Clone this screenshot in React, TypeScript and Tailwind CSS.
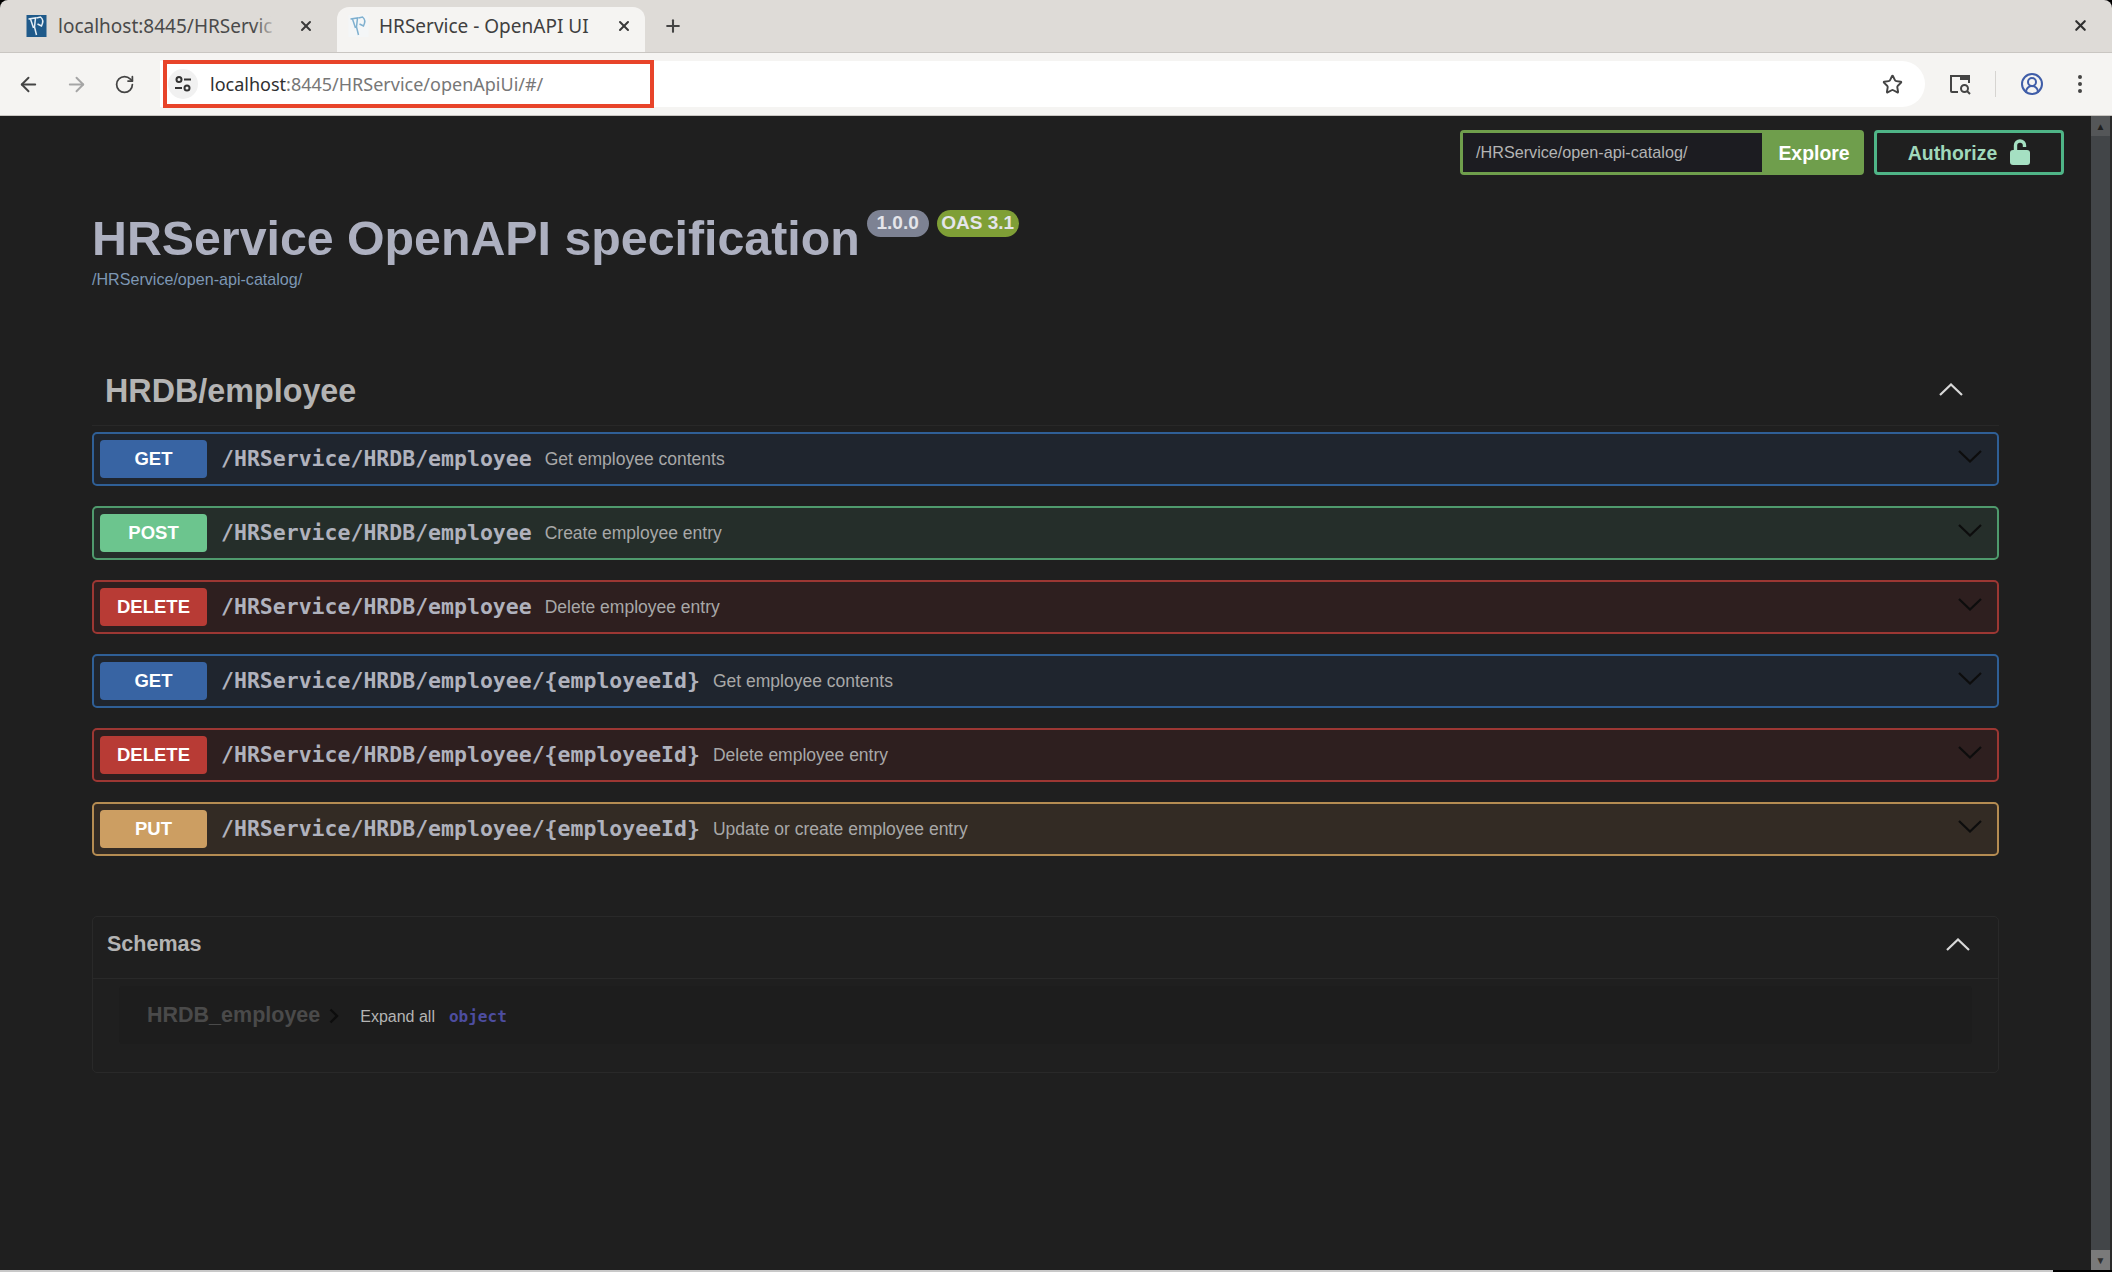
import { ArrowLeft, ArrowRight, RotateCw, Star, X, Plus, EllipsisVertical, CircleUserRound } from "lucide-react";

const rows = [
  { method: "GET", path: "/HRService/HRDB/employee", text: "Get employee contents", border: "border-[#2f5f96]", bg: "bg-[#1f252e]", badge: "bg-[#3864a3]" },
  { method: "POST", path: "/HRService/HRDB/employee", text: "Create employee entry", border: "border-[#4f9a6d]", bg: "bg-[#252e2a]", badge: "bg-[#6cc58e]" },
  { method: "DELETE", path: "/HRService/HRDB/employee", text: "Delete employee entry", border: "border-[#9c3733]", bg: "bg-[#2e1f1f]", badge: "bg-[#b83b35]" },
  { method: "GET", path: "/HRService/HRDB/employee/{employeeId}", text: "Get employee contents", border: "border-[#2f5f96]", bg: "bg-[#1f252e]", badge: "bg-[#3864a3]" },
  { method: "DELETE", path: "/HRService/HRDB/employee/{employeeId}", text: "Delete employee entry", border: "border-[#9c3733]", bg: "bg-[#2e1f1f]", badge: "bg-[#b83b35]" },
  { method: "PUT", path: "/HRService/HRDB/employee/{employeeId}", text: "Update or create employee entry", border: "border-[#b58c52]", bg: "bg-[#332b24]", badge: "bg-[#cc9e62]" },
];

function Favicon({ dark }: { dark?: boolean }) {
  return (
    <svg width="21" height="22" viewBox="0 0 20 22" className="shrink-0">
      <rect width="20" height="22" fill={dark ? "#1f5a8a" : "#f4f6f7"} />
      <path d="M2 4 L9 3 L8 12 L10 20 M4 4 L7 13 M10 3 L14 2 Q18 5 15 11 L11 9" stroke={dark ? "#e5eef5" : "#7fb0cf"} strokeWidth="1.5" fill="none" />
    </svg>
  );
}

// swagger style chevrons, wide and flat
function Arrow({ up, className }: { up?: boolean; className: string }) {
  return (
    <svg width="24" height="13" viewBox="0 0 24 13" fill="none" className={className}>
      <path d={up ? "M1 12 L12 1.5 L23 12" : "M1 1 L12 11.5 L23 1"} stroke="currentColor" strokeWidth="2.2" />
    </svg>
  );
}

function ChromeBar() {
  return (
    <div className="font-['Noto_Sans',sans-serif]">
      {/* tab strip */}
      <div className="h-[53px] bg-[#dedbd7] rounded-t-lg flex items-end pl-[12px] pr-[24px] border-b border-[#c9c6c2]">
        <div className="w-[325px] h-[45px] flex items-center pl-[14px] pb-[7px] text-[19px] text-[#4a4a4a]">
          <Favicon dark />
          <span className="relative ml-[11px] w-[220px] whitespace-nowrap">
            localhost:8445/HRServic
            <span className="absolute right-0 top-0 h-full w-[24px] bg-gradient-to-r from-transparent to-[#dedbd7]" />
          </span>
          <X size={16} strokeWidth={3} className="ml-[20px] text-[#3a3a3a]" />
        </div>
        <div className="w-[308px] h-[45px] bg-[#f5f4f2] rounded-t-xl flex items-center pl-[11px] pb-[7px] text-[19px] text-[#3f3f3f]">
          <Favicon />
          <span className="ml-[10px] w-[237px] whitespace-nowrap">HRService - OpenAPI UI</span>
          <X size={16} strokeWidth={3} className="text-[#3a3a3a]" />
        </div>
        <Plus size={20} strokeWidth={2.5} className="ml-[18px] mb-[16px] text-[#444]" />
        <X size={17} strokeWidth={3} className="ml-auto mb-[18px] mr-[-1px] text-[#2f2f2f]" />
      </div>
      {/* toolbar */}
      <div className="h-[63px] bg-[#f5f4f2] flex items-center border-b border-[#c9c6c2] pl-[17px] pr-[20px]">
        <ArrowLeft size={23} className="text-[#444]" />
        <ArrowRight size={23} className="ml-[25px] text-[#a5a5a5]" />
        <RotateCw size={21} className="ml-[26px] text-[#444]" />
        <div className="relative ml-[25px] w-[1765px] h-[46px] bg-white rounded-r-[23px] flex items-center pl-[8px] text-[18px]">
          <span className="w-[30px] h-[30px] rounded-full bg-[#f1f1f1] flex items-center justify-center">
            <svg width="18" height="18" viewBox="0 0 18 18" fill="none" stroke="#333" strokeWidth="2">
              <circle cx="5" cy="4.5" r="2.5" />
              <path d="M10 4.5h7M1 13h7" />
              <circle cx="13" cy="13" r="2.5" />
            </svg>
          </span>
          <span className="ml-[12px] text-[#2f2f2f]">localhost</span>
          <span className="text-[#777]">:8445/HRService/openApiUi/#/</span>
          <div className="absolute left-[3px] top-[-1px] w-[491px] h-[48px] border-[4px] border-[#e8442a]" />
          <Star size={21} strokeWidth={2.2} className="absolute right-[22px] text-[#444]" />
        </div>
        <svg width="24" height="24" viewBox="0 0 24 24" fill="none" className="ml-[23px] text-[#444]">
          <path d="M10 20H4a1 1 0 0 1-1-1V4h18v7" stroke="currentColor" strokeWidth="2" />
          <rect x="12" y="3" width="9" height="5" fill="currentColor" />
          <circle cx="16.5" cy="16.5" r="3.5" stroke="currentColor" strokeWidth="2" />
          <path d="M19 19l3 3" stroke="currentColor" strokeWidth="2" />
        </svg>
        <div className="ml-[23px] h-[26px] w-px bg-[#d6d4d1]" />
        <CircleUserRound size={24} className="ml-[24px] text-[#3f5da8]" />
        <EllipsisVertical size={24} className="ml-[24px] text-[#444]" />
      </div>
    </div>
  );
}

function OpRow({ r }: { r: (typeof rows)[number] }) {
  return (
    <div className={`h-[54px] border-2 rounded-[5px] flex items-center pl-[6px] pr-[15px] ${r.border} ${r.bg}`}>
      <span className={`w-[107px] h-[38px] rounded-[4px] flex items-center justify-center text-white font-bold text-[18.5px] ${r.badge}`}>
        {r.method}
      </span>
      <span className="ml-[14px] font-['DejaVu_Sans_Mono',monospace] font-bold text-[21.5px] text-[#b0b2bd]">{r.path}</span>
      <span className="ml-[13px] text-[17.5px] text-[#a8a8a8]">{r.text}</span>
      <Arrow className="ml-auto text-[#0d0d0d] -mt-[6px]" />
    </div>
  );
}

export default function App() {
  return (
    <div className="h-[1272px] bg-black overflow-hidden font-['Liberation_Sans',sans-serif]">
      <ChromeBar />
      <div className="h-[1154px] flex bg-[#1f1f1f]">
        <div className="flex-1 px-[92px] pt-[14px]">
          {/* explore + authorize */}
          <div className="flex justify-end gap-[10px] mr-[-65px] text-[19.4px]">
            <div className="w-[404px] h-[45px] flex border-[3px] border-[#6f9e4c] rounded-[4px]">
              <div className="flex-1 bg-[#1c1c21] flex items-center pl-[13px] text-[16.2px] text-[#b4b4b4]">/HRService/open-api-catalog/</div>
              <div className="w-[99px] bg-[#6f9e4c] flex items-center justify-center text-white font-bold pt-[2px] pl-[5px]">Explore</div>
            </div>
            <div className="w-[190px] h-[45px] flex items-center justify-center border-[3px] border-[#4fb587] rounded-[4px] font-bold text-[#a0d8bb]">
              <span className="pt-[2px]">Authorize</span>
              <svg width="20" height="26" viewBox="0 0 20 26" className="ml-[13px] mb-[1px]" fill="#a5e0c2">
                <rect x="0" y="11" width="20" height="15" rx="3" />
                <path d="M5.5 12V6.5a4.5 4.5 0 0 1 9 0v1.5" fill="none" stroke="#a5e0c2" strokeWidth="3.4" />
              </svg>
            </div>
          </div>

          {/* title */}
          <div className="mt-[31px] flex items-start">
            <h1 className="text-[48.3px] leading-[64px] font-bold text-[#adb0c0] whitespace-nowrap">HRService OpenAPI specification</h1>
            <span className="ml-[7px] mt-[4px] h-[27px] w-[62px] rounded-full bg-[#7d8293] flex items-center justify-center text-[19px] font-bold text-[#e4e5ea]">1.0.0</span>
            <span className="ml-[8px] mt-[4px] h-[27px] w-[82px] rounded-full bg-[#7f9f36] flex items-center justify-center text-[19px] font-bold text-[#e4e5ea]">OAS 3.1</span>
          </div>
          <a className="block -mt-[1px] text-[16.1px] leading-[20px] text-[#7d97b4]">/HRService/open-api-catalog/</a>

          {/* tag section */}
          <div className="mt-[72px] h-[65px] flex items-center pl-[13px] pr-[36px] border-b border-[#282828]">
            <h2 className="text-[32.3px] font-bold text-[#b4b4b4] -mt-[4px]">HRDB/employee</h2>
            <Arrow up className="ml-auto text-[#d8d8d8] -mt-[8px]" />
          </div>
          <div className="mt-[6px] flex flex-col gap-[20px]">
            {rows.map((r, i) => (
              <OpRow key={i} r={r} />
            ))}
          </div>

          {/* schemas */}
          <div className="mt-[60px] h-[157px] border border-[#292929] rounded-[5px]">
            <div className="h-[62px] flex items-center pl-[14px] pr-[28px] pb-[6px] border-b border-[#292929]">
              <h4 className="text-[21.5px] font-bold text-[#b4b4b4]">Schemas</h4>
              <Arrow up className="ml-auto text-[#d8d8d8]" />
            </div>
            <div className="mx-[26px] mt-[7px] h-[58px] bg-[#1d1d1d] rounded-[4px] flex items-center pl-[28px]">
              <span className="text-[21.5px] font-bold text-[#4a4a4a]">HRDB_employee</span>
              <svg width="10" height="16" viewBox="0 0 10 16" fill="none" className="ml-[9px] mt-[2px] text-[#0d0d0d]">
                <path d="M1.5 1.5 L8 8 L1.5 14.5" stroke="currentColor" strokeWidth="2.4" />
              </svg>
              <span className="ml-[21px] mt-[3px] text-[16px] text-[#b4b4b4]">Expand all</span>
              <span className="ml-[14px] mt-[3px] font-['DejaVu_Sans_Mono',monospace] font-bold text-[16px] text-[#4d4da0]">object</span>
            </div>
          </div>
        </div>

        {/* scrollbar */}
        <div className="w-[21px] border-r-2 border-[#2a2a2a] bg-[#424548] flex flex-col justify-between">
          <div className="h-[20px] bg-[#545658] flex items-center justify-center text-[#1f1f1f] text-[10px]">▲</div>
          <div className="h-[20px] bg-[#7a7a7a] flex items-center justify-center text-[#2e2e2e] text-[10px]">▼</div>
        </div>
      </div>
      <div className="h-[2px] w-[2053px] bg-[#c8c8c8]" />
    </div>
  );
}
